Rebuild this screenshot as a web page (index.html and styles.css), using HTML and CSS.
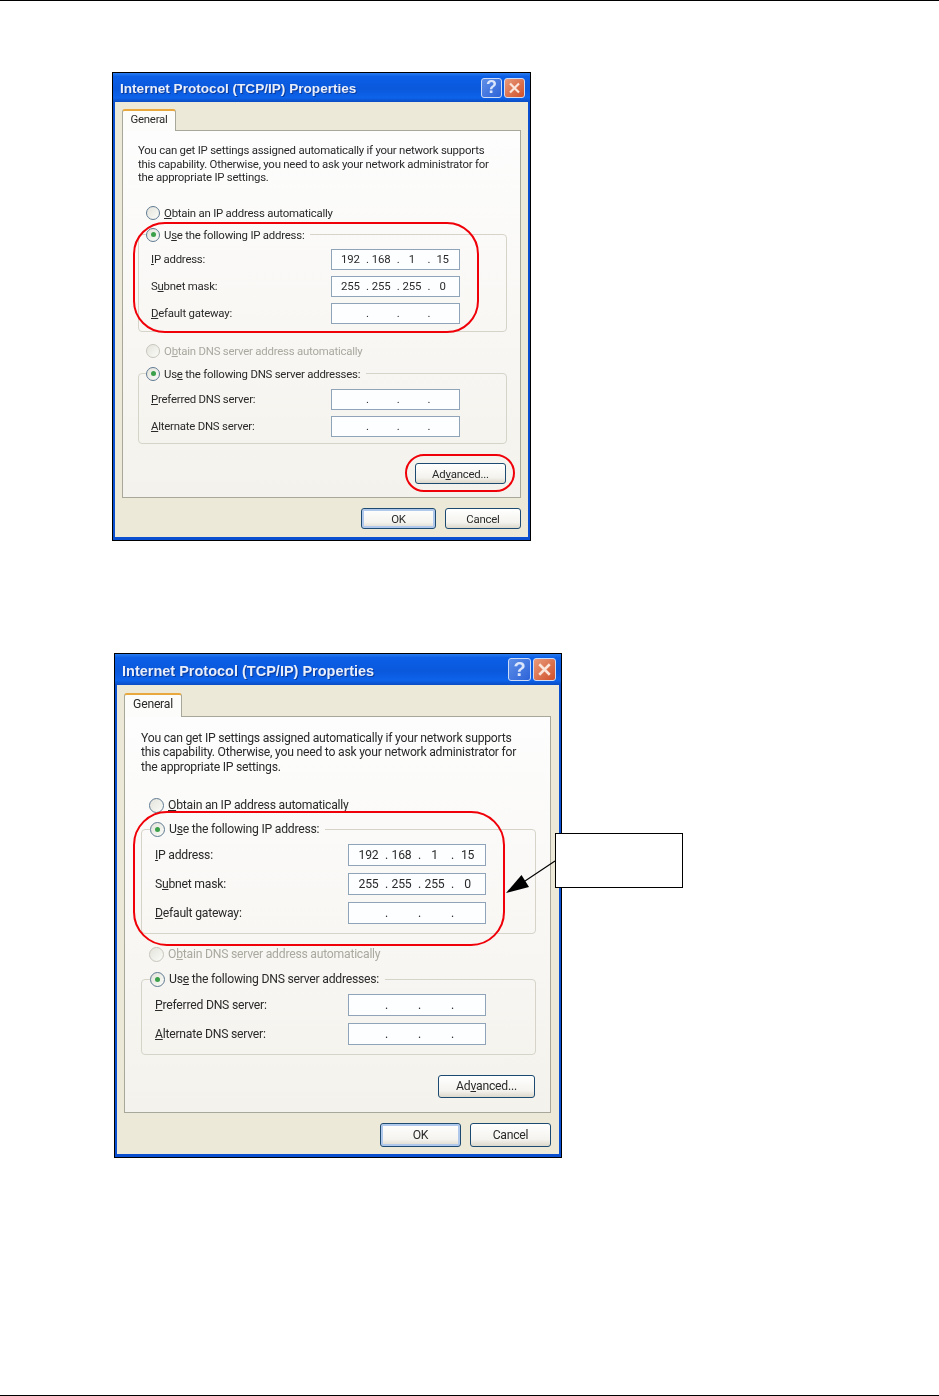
FILE: index.html
```html
<!DOCTYPE html>
<html lang="en">
<head>
    <meta charset="UTF-8">
    <meta name="viewport" content="width=device-width, initial-scale=1.0">
    <title>TCP/IP Properties</title>
    <link rel="stylesheet" href="styles.css">
</head>
<body>
<div class="page">

    <!-- first dialog, Advanced button circled -->
    <section class="dlg dlg-small">
        <div class="dlg-title">
            <span class="dlg-name">Internet Protocol (TCP/IP) Properties</span>
            <span class="cap-btn cap-help">?</span>
            <span class="cap-btn cap-close"><svg viewBox="0 0 20 20"><path d="M5 5 15 15M15 5 5 15"/></svg></span>
        </div>
        <div class="dlg-client">
            <div class="tab">General</div>
            <div class="panel">
                <p class="intro">You can get IP settings assigned automatically if your network supports<br>this capability. Otherwise, you need to ask your network administrator for<br>the appropriate IP settings.</p>
                <div class="radio-row first"><span class="radio"></span><span><u>O</u>btain an IP address automatically</span></div>
                <fieldset class="group">
                    <legend><span class="radio on"></span><span>U<u>s</u>e the following IP address:</span></legend>
                    <div class="field"><label><u>I</u>P address:</label><div class="ip"><span>192</span><span>168</span><span>1</span><span>15</span></div></div>
                    <div class="field"><label>S<u>u</u>bnet mask:</label><div class="ip"><span>255</span><span>255</span><span>255</span><span>0</span></div></div>
                    <div class="field"><label><u>D</u>efault gateway:</label><div class="ip"><span></span><span></span><span></span><span></span></div></div>
                </fieldset>
                <div class="radio-row off"><span class="radio"></span><span>O<u>b</u>tain DNS server address automatically</span></div>
                <fieldset class="group group-dns">
                    <legend><span class="radio on"></span><span>Us<u>e</u> the following DNS server addresses:</span></legend>
                    <div class="field"><label><u>P</u>referred DNS server:</label><div class="ip"><span></span><span></span><span></span><span></span></div></div>
                    <div class="field"><label><u>A</u>lternate DNS server:</label><div class="ip"><span></span><span></span><span></span><span></span></div></div>
                </fieldset>
                <div class="adv-row"><button class="btn btn-adv">Ad<u>v</u>anced...</button></div>
            </div>
            <div class="dlg-foot">
                <button class="btn btn-default">OK</button>
                <button class="btn">Cancel</button>
            </div>
        </div>
        <div class="ring ring-ip"></div>
        <div class="ring ring-adv"></div>
    </section>

    <!-- second dialog, IP block circled with callout -->
    <section class="dlg dlg-large">
        <div class="dlg-title">
            <span class="dlg-name">Internet Protocol (TCP/IP) Properties</span>
            <span class="cap-btn cap-help">?</span>
            <span class="cap-btn cap-close"><svg viewBox="0 0 20 20"><path d="M5 5 15 15M15 5 5 15"/></svg></span>
        </div>
        <div class="dlg-client">
            <div class="tab">General</div>
            <div class="panel">
                <p class="intro">You can get IP settings assigned automatically if your network supports<br>this capability. Otherwise, you need to ask your network administrator for<br>the appropriate IP settings.</p>
                <div class="radio-row first"><span class="radio"></span><span><u>O</u>btain an IP address automatically</span></div>
                <fieldset class="group">
                    <legend><span class="radio on"></span><span>U<u>s</u>e the following IP address:</span></legend>
                    <div class="field"><label><u>I</u>P address:</label><div class="ip"><span>192</span><span>168</span><span>1</span><span>15</span></div></div>
                    <div class="field"><label>S<u>u</u>bnet mask:</label><div class="ip"><span>255</span><span>255</span><span>255</span><span>0</span></div></div>
                    <div class="field"><label><u>D</u>efault gateway:</label><div class="ip"><span></span><span></span><span></span><span></span></div></div>
                </fieldset>
                <div class="radio-row off"><span class="radio"></span><span>O<u>b</u>tain DNS server address automatically</span></div>
                <fieldset class="group group-dns">
                    <legend><span class="radio on"></span><span>Us<u>e</u> the following DNS server addresses:</span></legend>
                    <div class="field"><label><u>P</u>referred DNS server:</label><div class="ip"><span></span><span></span><span></span><span></span></div></div>
                    <div class="field"><label><u>A</u>lternate DNS server:</label><div class="ip"><span></span><span></span><span></span><span></span></div></div>
                </fieldset>
                <div class="adv-row"><button class="btn btn-adv">Ad<u>v</u>anced...</button></div>
            </div>
            <div class="dlg-foot">
                <button class="btn btn-default">OK</button>
                <button class="btn">Cancel</button>
            </div>
        </div>
        <div class="ring ring-ip"></div>
        <div class="callout"></div>
        <svg class="arrow" viewBox="0 0 60 40"><path class="arrow-line" d="M50 2 14 26"/><path class="arrow-head" d="M1 34 16.5 16 24 28Z"/></svg>
    </section>

    <div class="page-foot"></div>
</div>
</body>
</html>
```

FILE: styles.css
```css
body {
    margin: 0;
    background-color: #fff;
    font-family: Roboto, "Liberation Sans", Arial, sans-serif;
    color: #2a2a2a;
}

.page {
    height: 1396px;
    box-sizing: border-box;
    border-top: 1px solid #000;
    display: flex;
    flex-direction: column;
}

.page-foot {
    margin-top: auto;
    border-top: 1px solid #000;
}

/* sizes of the two dialogs */
.dlg-small {
    --fs: 11.4px;
    --ls: -0.22px;
    --title-fs: 13.6px;
    --title-drop: 2px;
    --line: 13.5px;
    --row: 16px;
    --radio: 14px;
    --title-h: 29px;
    --tab-w: 54px;
    --tab-h: 22px;
    --client-top: 7px;
    --client-right: 7px;
    --client-bottom: 8px;
    --pad-left: 15px;
    --pad-right: 13px;
    --group-left: 12px;
    --label-w: 180px;
    --ip-w: 129px;
    --oct-w: 31px;
    --input-h: 21px;
    --field-gap: 6px;
    --first-gap: 20px;
    --group-gap: 6px;
    --legend-gap: 6px;
    --group-bottom: 7px;
    --dns-gap: 7px;
    --dns-legend-gap: 7px;
    --dns-bottom: 6px;
    --off-gap: 11px;
    --adv-gap: 19px;
    --adv-w: 91px;
    --btn-h: 21px;
    --btn-pad: 1px;
    --foot-h: 21px;
    --panel-top: 13px;
    --panel-bottom: 13px;
    --ok-w: 75px;
    --cancel-w: 76px;
    --cap-w: 21px;
    --cap-h: 20px;
    --cap-fs: 18px;
    width: 419px;
    margin: 71px 0 0 112px;
}

.dlg-large {
    --fs: 12.2px;
    --ls: -0.235px;
    --title-fs: 14.5px;
    --title-drop: 3px;
    --line: 14.5px;
    --row: 17px;
    --radio: 15px;
    --title-h: 31px;
    --tab-w: 58px;
    --tab-h: 24px;
    --client-top: 8px;
    --client-right: 8px;
    --client-bottom: 7px;
    --pad-left: 16px;
    --pad-right: 14px;
    --group-left: 13px;
    --label-w: 193px;
    --ip-w: 138px;
    --oct-w: 33px;
    --input-h: 22px;
    --field-gap: 7px;
    --first-gap: 23px;
    --group-gap: 7px;
    --legend-gap: 5.5px;
    --group-bottom: 9px;
    --dns-gap: 8px;
    --dns-legend-gap: 5.5px;
    --dns-bottom: 9px;
    --off-gap: 12.5px;
    --adv-gap: 20px;
    --adv-w: 97px;
    --btn-h: 23px;
    --btn-pad: 0;
    --foot-h: 24px;
    --panel-top: 14px;
    --panel-bottom: 14px;
    --ok-w: 81px;
    --cancel-w: 81px;
    --cap-w: 23px;
    --cap-h: 23px;
    --cap-fs: 20px;
    width: 448px;
    margin: 112px 0 0 114px;
}

.dlg {
    position: relative;
    box-sizing: border-box;
    border: 1px solid #000;
    background-color: #0a4fd0;
    font-size: var(--fs);
    letter-spacing: var(--ls);
}

.dlg-title {
    height: var(--title-h);
    box-sizing: border-box;
    display: flex;
    align-items: center;
    gap: 2px;
    padding: 0 5px 0 7px;
    letter-spacing: 0;
    background: linear-gradient(#2a7cf0 0, #0b5fe6 12%, #0a58dc 55%, #0d63ea 85%, #0a4cc4 100%);
    filter: blur(0.25px);
}

.dlg-name {
    flex: 1;
    padding-top: var(--title-drop);
    font-family: "Liberation Sans", Arial, sans-serif;
    font-size: var(--title-fs);
    font-weight: bold;
    color: #e8eefa;
    text-shadow: 1px 1px 0 #0a3a9c;
}

.cap-btn {
    width: var(--cap-w);
    height: var(--cap-h);
    box-sizing: border-box;
    display: flex;
    align-items: center;
    justify-content: center;
    border: 1px solid #cfdcf6;
    border-radius: 3px;
    color: #dbe6fb;
    font-family: "Liberation Sans", Arial, sans-serif;
    font-size: var(--cap-fs);
    font-weight: bold;
}

.cap-help {
    background: linear-gradient(135deg, #5f8fe8, #2d63d8);
}

.cap-close {
    background: linear-gradient(135deg, #e89a7a, #d0502a);
}

.cap-close svg {
    width: 100%;
    height: 100%;
    fill: none;
    stroke: #fbe6dc;
    stroke-width: 2.4;
}

.dlg-client {
    margin: 0 2px 3px;
    padding: var(--client-top) var(--client-right) var(--client-bottom) 7px;
    background-color: #ece9d8;
    filter: blur(0.25px);
}

.tab {
    position: relative;
    z-index: 1;
    width: var(--tab-w);
    height: var(--tab-h);
    box-sizing: border-box;
    margin-bottom: -1px;
    text-align: center;
    line-height: calc(var(--tab-h) - 6px);
    background-color: #fcfcfa;
    border: 1px solid #a8a89a;
    border-top: 2px solid #e8a83e;
    border-bottom: none;
    border-radius: 3px 3px 0 0;
}

.panel {
    border: 1px solid #a8a89a;
    padding: var(--panel-top) var(--pad-right) var(--panel-bottom) var(--pad-left);
    background: linear-gradient(#fdfdfd, #f4f2ec);
}

.intro {
    margin: 0;
    line-height: var(--line);
    white-space: nowrap;
}

.radio-row,
legend {
    display: flex;
    align-items: center;
    gap: 4px;
    height: var(--row);
    line-height: var(--row);
    white-space: nowrap;
}

.radio-row {
    margin-left: 8px;
    margin-top: var(--off-gap);
}

.radio-row.first {
    margin-top: var(--first-gap);
}

.radio-row.off {
    color: #a9a99f;
}

.radio {
    width: var(--radio);
    height: var(--radio);
    box-sizing: border-box;
    flex: none;
    display: flex;
    align-items: center;
    justify-content: center;
    border: 1px solid #5f7a92;
    border-radius: 50%;
    background: linear-gradient(135deg, #e4e4dc, #fbfbf8);
}

.radio.on::after {
    content: "";
    width: 5px;
    height: 5px;
    border-radius: 50%;
    background-color: #3aa04a;
}

.off .radio {
    border-color: #c6c6bc;
}

.group {
    margin: var(--group-gap) 0 0;
    padding: var(--legend-gap) 0 var(--group-bottom) var(--group-left);
    border: 1px solid #d6d4c8;
    border-radius: 4px;
}

.group-dns {
    margin-top: var(--dns-gap);
    padding-top: var(--dns-legend-gap);
    padding-bottom: var(--dns-bottom);
}

legend {
    margin-left: -5px;
    padding: 0 6px 0 0;
}

.field {
    display: flex;
    align-items: center;
    margin-bottom: var(--field-gap);
}

.field:last-child {
    margin-bottom: 0;
}

.field label {
    width: var(--label-w);
    flex: none;
}

.ip {
    width: var(--ip-w);
    height: var(--input-h);
    box-sizing: border-box;
    padding: 1px 0 0 4px;
    display: flex;
    align-items: center;
    border: 1px solid #8fa4b8;
    background-color: #fdfeff;
}

.ip span {
    position: relative;
    width: var(--oct-w);
    height: var(--line);
    line-height: var(--line);
    padding-right: 2px;
    box-sizing: border-box;
    text-align: center;
}

.ip span:not(:last-child)::after {
    content: ".";
    position: absolute;
    right: -2px;
    top: 0;
}

.adv-row {
    display: flex;
    justify-content: flex-end;
    margin: var(--adv-gap) 1px 0 0;
}

.btn {
    height: var(--btn-h);
    padding: var(--btn-pad) 0 0;
    font-family: inherit;
    font-size: inherit;
    letter-spacing: inherit;
    color: inherit;
    border: 1px solid #1c4a70;
    border-radius: 3px;
    background: linear-gradient(#fff, #f4f3ee 70%, #dcd8cc);
}

.btn-adv {
    width: var(--adv-w);
}

.btn-default {
    box-shadow: inset 0 0 0 2px #b0c8ec;
}

.dlg-foot {
    display: flex;
    justify-content: flex-end;
    gap: 9px;
    margin-top: 10px;
}

.dlg-foot .btn {
    width: var(--cancel-w);
    height: var(--foot-h);
}

.dlg-foot .btn-default {
    width: var(--ok-w);
}

/* red marks drawn over the screenshots */
.ring {
    position: absolute;
    box-sizing: border-box;
    border: 2px solid #f00008;
}

.dlg-small .ring-ip {
    left: 20px;
    top: 149px;
    width: 346px;
    height: 111px;
    border-radius: 32px;
}

.dlg-small .ring-adv {
    left: 292px;
    top: 381px;
    width: 110px;
    height: 38px;
    border-radius: 19px;
}

.dlg-large .ring-ip {
    left: 18px;
    top: 157px;
    width: 372px;
    height: 135px;
    border-radius: 34px;
}

.callout {
    position: absolute;
    left: 440px;
    top: 179px;
    width: 128px;
    height: 55px;
    box-sizing: border-box;
    border: 1px solid #000;
    background-color: #fff;
}

.arrow {
    position: absolute;
    left: 390px;
    top: 205px;
    width: 60px;
    height: 40px;
}

.arrow-line {
    stroke: #000;
    stroke-width: 1.2;
    fill: none;
}

.arrow-head {
    fill: #000;
}
```
